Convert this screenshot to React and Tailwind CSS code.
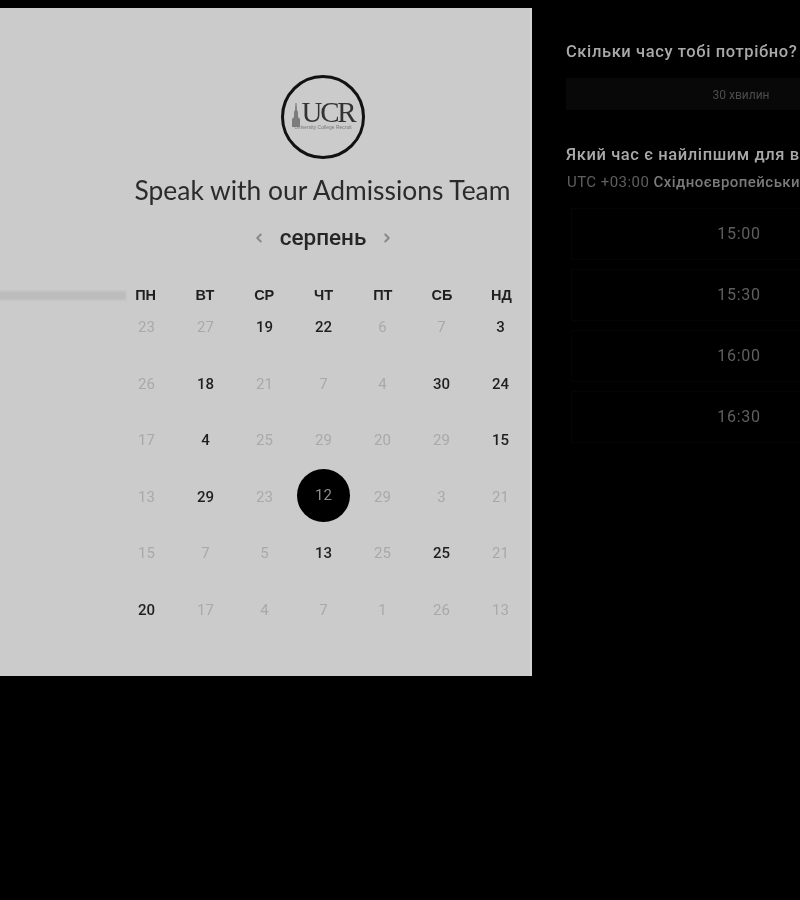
import React from 'react';
import { ChevronLeft, ChevronRight } from 'lucide-react';

const weekDays = ['ПН', 'ВТ', 'СР', 'ЧТ', 'ПТ', 'СБ', 'НД'];

// a = active day, s = selected day, anything else is greyed out
const weeks = [
    [['23'], ['27'], ['19', 'a'], ['22', 'a'], ['6'], ['7'], ['3', 'a']],
    [['26'], ['18', 'a'], ['21'], ['7'], ['4'], ['30', 'a'], ['24', 'a']],
    [['17'], ['4', 'a'], ['25'], ['29'], ['20'], ['29'], ['15', 'a']],
    [['13'], ['29', 'a'], ['23'], ['12', 's'], ['29'], ['3'], ['21']],
    [['15'], ['7'], ['5'], ['13', 'a'], ['25'], ['25', 'a'], ['21']],
    [['20', 'a'], ['17'], ['4'], ['7'], ['1'], ['26'], ['13']],
];

const slots = ['15:00', '15:30', '16:00', '16:30'];

const Logo = () => (
    <div className="relative w-[84px] h-[84px] ml-[116px] rounded-full border-[3px] border-[#111111] flex items-center justify-center">
        <svg className="absolute left-[8px] top-[25px]" width="8" height="24" viewBox="0 0 8 24" fill="#7c7c7c">
            <path d="M3.5 0 L4.5 0 L5 7 L6 9 L6 14 L8 16 L8 24 L0 24 L0 16 L2 14 L2 9 L3 7 Z" />
        </svg>
        <div className="flex flex-col items-center mt-[-4px]">
            <div className="font-['Liberation_Serif',serif] text-[29px] h-[25px] leading-[25px] tracking-[-2.2px] text-[#333333] ml-[10px]">UCR</div>
            <div className="font-['Liberation_Sans',sans-serif] text-[5px] leading-[5px] whitespace-nowrap text-[#777777]">University College Recruit</div>
        </div>
    </div>
);

const DayCell = ({ value, kind }) => {
    if (kind === 's') {
        return (
            <div className="flex justify-center">
                <div className="w-[53px] h-[53px] mt-[-20px] rounded-full bg-black text-[#8d8d8d] text-[15px] flex items-center justify-center">
                    <span className="mt-[-1px]">{value}</span>
                </div>
            </div>
        );
    }
    return (
        <div className={`text-center text-[15px] leading-[16px] ${kind === 'a' ? 'font-medium text-[#1f1f1f]' : 'text-[#a9a9a9]'}`}>
            {value}
        </div>
    );
};

const App = () => {
    return (
        <div className="w-[800px] h-[900px] overflow-hidden bg-black flex pt-2 font-['Roboto',sans-serif] blur-[0.4px]">
            <div className="w-[532px] h-[668px] shrink-0 bg-[#cbcbcb] flex flex-col items-center pt-[67px] border-r-2 border-[#d4d4d4]">
                <Logo />
                <h1 className="mt-[13px] ml-[115px] font-['Lato',sans-serif] text-[26.4px] leading-[36px] text-[#2b2b2b] whitespace-nowrap">
                    Speak with our Admissions Team
                </h1>
                <div className="mt-[14px] ml-[116px] flex items-center gap-[14px] h-[32px]">
                    <ChevronLeft size={14} strokeWidth={3.5} className="text-[#8a8a8a]" />
                    <span className="font-medium text-[22.5px] text-[#262626]">серпень</span>
                    <ChevronRight size={14} strokeWidth={3.5} className="text-[#8a8a8a]" />
                </div>
                <div className="w-full mt-[33px] flex items-center">
                    <div className="w-[130px] h-[9px] ml-[-4px] shrink-0 bg-[#bcbcbc] blur-[1px]" />
                    <div className="grid grid-cols-7 w-[415px] ml-[-10px] shrink-0">
                        {weekDays.map((d) => (
                            <div key={d} className="text-center font-['Liberation_Sans',sans-serif] font-bold text-[14.5px] leading-[16px] text-[#1f1f1f]">{d}</div>
                        ))}
                    </div>
                </div>
                <div className="w-full pl-[117px] mt-[16px] flex flex-col gap-[40.6px]">
                    {weeks.map((week, i) => (
                        <div key={i} className="grid grid-cols-7 h-[16px]">
                            {week.map(([value, kind], j) => (
                                <DayCell key={j} value={value} kind={kind} />
                            ))}
                        </div>
                    ))}
                </div>
            </div>
            <div className="w-[380px] shrink-0 pl-[34px] pt-[34px]">
                <h2 className="text-[16.5px] leading-[20px] font-medium tracking-[0.6px] text-[#a9a9a9] whitespace-nowrap">Скільки часу тобі потрібно?</h2>
                <div className="mt-[16px] w-[350px] h-[32px] bg-[#080808] flex items-center justify-center text-[12px] text-[#4c4c4c] pt-[1px]">
                    30 хвилин
                </div>
                <h2 className="mt-[35px] text-[16.5px] leading-[20px] font-medium tracking-[0.6px] text-[#a9a9a9] whitespace-nowrap">Який час є найліпшим для вас?</h2>
                <p className="mt-[8px] ml-[1px] text-[15px] leading-[18px] tracking-[0.45px] text-[#5f5f5f] whitespace-nowrap">
                    UTC +03:00 <span className="font-medium text-[#7a7a7a]">Східноєвропейський час</span>
                </p>
                <div className="mt-[17px] ml-[5px] w-[336px] flex flex-col gap-[9px]">
                    {slots.map((s) => (
                        <div key={s} className="h-[52px] border border-[#050505] flex items-center justify-center text-[16px] tracking-[0.7px] text-[#5f5f5f]">
                            {s}
                        </div>
                    ))}
                </div>
            </div>
        </div>
    );
};

export default App;
